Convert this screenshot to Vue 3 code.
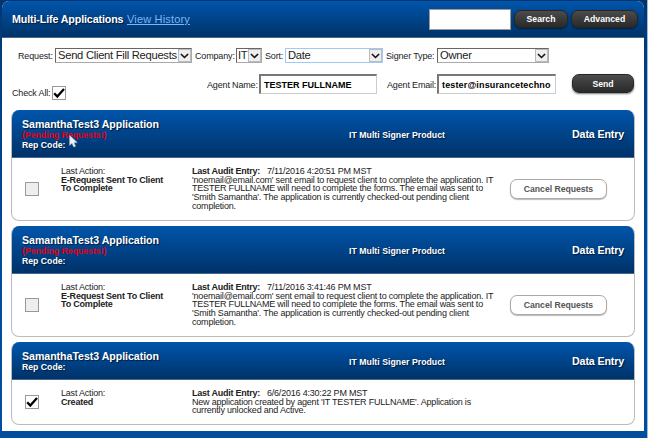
<script setup>
const pendingText =
  ["'noemail@email.com' sent email to request client to complete the application. IT", "TESTER FULLNAME will need to complete the forms. The email was sent to", "'Smith Samantha'. The application is currently checked-out pending client", 'completion.']
const cards = [
  { pending: true, cursor: true, action: ['E-Request Sent To Client', 'To Complete'], date: '7/11/2016 4:20:51 PM MST', lines: pendingText },
  { pending: true, cursor: false, action: ['E-Request Sent To Client', 'To Complete'], date: '7/11/2016 3:41:46 PM MST', lines: pendingText },
  { pending: false, cursor: false, action: ['Created'], date: '6/6/2016 4:30:22 PM MST', lines: ["New application created by agent 'IT TESTER FULLNAME'. Application is", 'currently unlocked and Active.'] },
]
const selects = [
  { label: 'Request:', value: 'Send Client Fill Requests', cls: 'request' },
  { label: 'Company:', value: 'IT', cls: 'company' },
  { label: 'Sort:', value: 'Date', cls: 'sort' },
  { label: 'Signer Type:', value: 'Owner', cls: 'signer' },
]
</script>

<template>
  <div class="page">
    <div class="panel">
      <header class="top">
        <h1 class="title">Multi-Life Applications</h1>
        <a class="history">View History</a>
        <div class="search-box"></div>
        <button class="dark search">Search</button>
        <button class="dark advanced">Advanced</button>
      </header>
      <div class="filters">
        <div v-for="s in selects" :key="s.cls" class="field" :class="s.cls">
          <span class="label">{{ s.label }}</span>
          <div class="select">
            <span class="value">{{ s.value }}</span>
            <span class="arrow"><svg width="9" height="6" viewBox="0 0 9 6"><path d="M.9 1 4.5 4.5 8.1 1" fill="none" stroke="#111" stroke-width="1.6" /></svg></span>
          </div>
        </div>
      </div>
      <div class="agent">
        <div class="check-all">
          <span class="label">Check All:</span>
          <span class="box on"><svg width="12" height="12" viewBox="0 0 12 12"><path d="M1.2 6.3 4.3 9.6 11 2" fill="none" stroke="#000" stroke-width="2.3" /></svg></span>
        </div>
        <span class="label name-label">Agent Name:</span>
        <div class="input name">TESTER FULLNAME</div>
        <span class="label email-label">Agent Email:</span>
        <div class="input email"><span>tester@insurancetechno</span></div>
        <button class="dark send">Send</button>
      </div>
      <div class="cards">
        <section v-for="(c, i) in cards" :key="i" class="card" :class="{ short: !c.pending }">
          <div class="head">
            <div class="who">
              <h2>SamanthaTest3 Application</h2>
              <div v-if="c.pending" class="pending">(Pending Requests!)</div>
              <div class="rep">Rep Code:</div>
              <svg v-if="c.cursor" class="cursor" width="9" height="13" viewBox="0 0 9 13"><path d="M.7.5V10.3L3 8.2 4.8 12 6.5 11.2 4.9 7.6H8.2Z" fill="#f3f3f3" stroke="#bcc6d5" stroke-width=".6" /></svg>
            </div>
            <div class="product">IT Multi Signer Product</div>
            <div class="stage">Data Entry</div>
          </div>
          <div class="body">
            <div class="tick">
              <span class="box" :class="{ on: !c.pending }"><svg v-if="!c.pending" width="12" height="12" viewBox="0 0 12 12"><path d="M1.2 6.3 4.3 9.6 11 2" fill="none" stroke="#000" stroke-width="2.3" /></svg></span>
            </div>
            <div class="action">
              <div class="plain">Last Action:</div>
              <div v-for="a in c.action" :key="a" class="bold">{{ a }}</div>
            </div>
            <div class="audit">
              <div class="entry"><b>Last Audit Entry:</b><span>{{ c.date }}</span></div>
              <div v-for="l in c.lines" :key="l">{{ l }}</div>
            </div>
            <button v-if="c.pending" class="cancel">Cancel Requests</button>
          </div>
        </section>
      </div>
    </div>
  </div>
</template>

<style>
body { overflow: hidden; }
</style>

<style scoped>
.page { box-sizing: border-box; width: 648px; height: 438px; padding: 1px 3px 0 2px; border-right: 1px solid #9dbbdc; background: linear-gradient(#00356d, #003f80 15%, #004b9b 60%, #004f9f); font-family: "Liberation Sans", Arial, sans-serif; font-size: 8.7px; color: #222; white-space: nowrap; overflow: hidden; }
.panel { height: 430px; background: #fff; border-radius: 7px 7px 0 0; overflow: hidden; }
.top { box-sizing: border-box; height: 37px; display: flex; align-items: center; padding: 0 6px 0 10px; background: linear-gradient(#0055ab, #003268); border-bottom: 1px solid #42688f; }
.title { margin: 0; font-size: 10.7px; letter-spacing: -.12px; line-height: 14px; color: #fff; text-shadow: 1px 1px 1px #001b3c; width: 115px; flex: none; }
.history { color: #7fb4f6; font-size: 11px; letter-spacing: .17px; line-height: 12px; text-decoration: underline; flex: none; margin-right: auto; }
.search-box { box-sizing: border-box; width: 82px; height: 21px; background: #fff; border: 1px solid #999; margin-right: 3px; }
button { font-family: inherit; box-sizing: border-box; padding: 0; }
.dark { height: 18px; flex: none; border: 1px solid #262626; border-radius: 7px; color: #fff; font-size: 8.7px; font-weight: bold; background: linear-gradient(#4c4c4c, #292929); box-shadow: 0 1px 2px #0008; }
.search { width: 54px; margin-right: 3px; }
.advanced { width: 67px; }
.filters { display: flex; height: 15px; margin-top: 10px; padding-left: 16px; }
.field { display: flex; align-items: center; }
.label { font-size: 9px; letter-spacing: -.16px; }
.select { box-sizing: border-box; height: 15px; display: flex; flex: 1; border: 1px solid #888; border-color: #666 #aaa #aaa #666; font-size: 11.2px; letter-spacing: -.27px; line-height: 13px; }
.value { flex: 1; padding-left: 2px; }
.arrow { display: flex; box-sizing: border-box; width: 13px; flex: none; align-items: center; justify-content: center; background: #eee; border: 1px solid #bbb; }
.request { width: 174px; margin-right: 3px; }
.request .label { width: 37px; flex: none; }
.company { width: 67px; margin-right: 3px; }
.company .label { width: 41px; flex: none; }
.company .value { padding-left: 1px; }
.sort { width: 118px; margin-right: 3px; }
.sort .label { width: 20px; flex: none; }
.sort .select { border-color: #9ecbf5; }
.signer { width: 163px; }
.signer .label { width: 51px; flex: none; }
.agent { display: flex; height: 47px; padding-left: 10px; align-items: flex-start; }
.check-all { display: flex; align-items: center; width: 195px; padding-top: 23px; }
.check-all .label { width: 40px; }
.box { display: flex; align-items: center; justify-content: center; box-sizing: border-box; width: 14px; height: 14px; border: 1px solid #999; background: #eee; }
.box.on { background: #fff; }
.name-label, .email-label { line-height: 12px; margin-top: 16px; }
.name-label { width: 52px; }
.input { box-sizing: border-box; height: 20px; margin-top: 11px; border: 1px solid #ccc; border-top: 2px solid #777; border-left: 2px solid #777; font-size: 9px; font-weight: bold; line-height: 18px; color: #000; padding-left: 3px; overflow: hidden; }
.name { width: 118px; margin-right: 10px; }
.email-label { width: 50px; }
.email { width: 119px; margin-right: 16px; letter-spacing: .15px; }
.send { width: 62px; height: 19px; margin-top: 11px; }
.cards { display: flex; flex-direction: column; gap: 5px; padding: 0 9px; }
.card { box-sizing: border-box; height: 111px; border: 1px solid #bbb; border-top: 0; border-radius: 8px; overflow: hidden; }
.card.short { height: 83px; }
.head { box-sizing: border-box; display: flex; align-items: center; height: 48px; padding: 1px 10px 0 10px; background: linear-gradient(#0055ab, #003268); border-bottom: 1px solid #42688f; color: #fff; font-weight: bold; text-shadow: 1px 1px 1px #001b3c; }
.short .head { height: 38px; }
.who { position: relative; width: 327px; }
h2 { margin: 0; font-size: 10.6px; letter-spacing: -.03px; line-height: 12px; }
.pending { color: #e00014; line-height: 10px; text-shadow: none; }
.rep { line-height: 11px; }
.cursor { position: absolute; left: 47px; top: 17px; }
.product { flex: 1; padding-top: 2px; letter-spacing: .04px; }
.stage { font-size: 10.7px; letter-spacing: -.15px; }
.body { display: flex; position: relative; padding-left: 13px; height: 62px; font-size: 9px; letter-spacing: -.2px; }
.tick { width: 36px; display: flex; align-items: center; }
.short .body { height: 44px; }
.action { width: 131px; padding-top: 9px; line-height: 8.7px; }
.audit { width: 318px; padding-top: 9px; line-height: 8.7px; }
.bold { font-weight: bold; }
.entry b { letter-spacing: -.25px; }
.entry span { margin-left: 7px; }
.cancel { width: 97px; height: 20px; margin-top: 21px; border: 1px solid #aaa; border-radius: 7px; background: #fff; color: #555; font-size: 8.7px; letter-spacing: -.05px; font-weight: bold; box-shadow: 0 1px 1px #bbb; }
</style>
